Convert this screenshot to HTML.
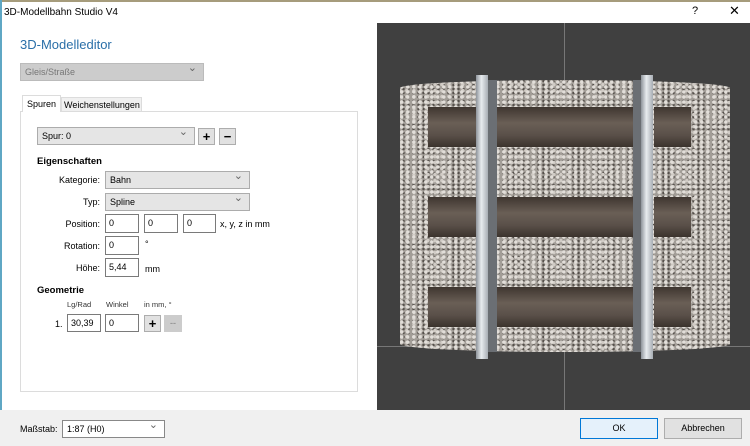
<!DOCTYPE html>
<html><head><style>
*{box-sizing:border-box;margin:0;padding:0}
body{width:750px;height:446px;overflow:hidden;background:#fff;font-family:"Liberation Sans",sans-serif;font-size:9px;color:#000;position:relative}
.a{position:absolute}
.cb{position:absolute;background:#e5e5e5;border:1px solid #acacac;padding:2px 4px;font-size:9px;line-height:12px}
.cb:after{content:"⌄";position:absolute;right:6px;top:-2px;color:#666;font-size:11px}
.in{position:absolute;background:#fff;border:1px solid #7a7a7a;padding:2px 3px;font-size:9px;line-height:12px}
.bt{position:absolute;background:#e1e1e1;border:1px solid #adadad;text-align:center;font-weight:bold;font-size:13px;line-height:15px}
.lb{position:absolute;text-align:right;font-size:9px}
.grav{background:
radial-gradient(circle at 30% 40%,#e2ded9 0 1.5px,transparent 2px) 0 0/6px 5px,
radial-gradient(circle at 70% 60%,#d0cbc5 0 1.5px,transparent 2px) 2px 1px/7px 6px,
radial-gradient(circle at 50% 50%,#55504b 0 1px,transparent 1.5px) 1px 3px/5px 4px,
#a29d97}
.tie{position:absolute;background:linear-gradient(#3f3630,#6a5f56 40%,#5a5049 70%,#3b332d);}
.rail{position:absolute;background:linear-gradient(90deg,#8e949b,#e8ecef 45%,#a7adb3);}
</style></head><body>
<div class="a" style="left:0;top:0;width:750px;height:2px;background:#a69c7c"></div>
<div class="a" style="left:0;top:0;width:2px;height:410px;background:#5fa7c4"></div>
<div class="a" style="left:4px;top:7px;font-size:10px">3D-Modellbahn Studio V4</div>
<div class="a" style="left:692px;top:5px;font-size:11px">?</div>
<div class="a" style="left:729px;top:3px;font-size:13px">✕</div>
<div class="a" style="left:20px;top:37px;font-size:13px;color:#2a6fa8">3D-Modelleditor</div>
<div class="cb" style="left:20px;top:63px;width:184px;height:18px;background:#ccc;border-color:#bbb;color:#777">Gleis/Straße</div>
<div class="a" style="left:20px;top:111px;width:338px;height:281px;border:1px solid #dcdcdc;background:#fff"></div>
<div class="a" style="left:22px;top:95px;width:39px;height:17px;border:1px solid #dcdcdc;border-bottom:none;background:#fff;padding:3px 4px">Spuren</div>
<div class="a" style="left:61px;top:97px;width:81px;height:15px;border:1px solid #dcdcdc;background:#f0f0f0;padding:2px 2px">Weichenstellungen</div>
<div class="cb" style="left:37px;top:127px;width:158px;height:18px">Spur: 0</div>
<div class="bt" style="left:198px;top:128px;width:17px;height:17px">+</div>
<div class="bt" style="left:219px;top:128px;width:17px;height:17px">−</div>
<div class="a" style="left:37px;top:156px;font-weight:bold;font-size:9.5px">Eigenschaften</div>
<div class="lb" style="left:30px;width:70px;top:175px">Kategorie:</div>
<div class="cb" style="left:105px;top:171px;width:145px;height:18px">Bahn</div>
<div class="lb" style="left:30px;width:70px;top:197px">Typ:</div>
<div class="cb" style="left:105px;top:193px;width:145px;height:18px">Spline</div>
<div class="lb" style="left:30px;width:70px;top:219px">Position:</div>
<div class="in" style="left:105px;top:214px;width:34px;height:19px">0</div>
<div class="in" style="left:144px;top:214px;width:34px;height:19px">0</div>
<div class="in" style="left:183px;top:214px;width:33px;height:19px">0</div>
<div class="a" style="left:220px;top:219px">x, y, z in mm</div>
<div class="lb" style="left:30px;width:70px;top:241px">Rotation:</div>
<div class="in" style="left:105px;top:236px;width:34px;height:19px">0</div>
<div class="a" style="left:145px;top:239px">°</div>
<div class="lb" style="left:30px;width:70px;top:263px">Höhe:</div>
<div class="in" style="left:105px;top:258px;width:34px;height:19px">5,44</div>
<div class="a" style="left:145px;top:264px">mm</div>
<div class="a" style="left:37px;top:285px;font-weight:bold;font-size:9.5px">Geometrie</div>
<div class="a" style="left:67px;top:300px;font-size:7.5px;color:#333">Lg/Rad</div>
<div class="a" style="left:106px;top:300px;font-size:7.5px;color:#333">Winkel</div>
<div class="a" style="left:144px;top:300px;font-size:7.5px;color:#333">in mm, °</div>
<div class="a" style="left:55px;top:319px">1.</div>
<div class="in" style="left:67px;top:314px;width:34px;height:18px">30,39</div>
<div class="in" style="left:105px;top:314px;width:34px;height:18px">0</div>
<div class="bt" style="left:144px;top:315px;width:17px;height:17px">+</div>
<div class="bt" style="left:164px;top:315px;width:18px;height:17px;background:#ccc;border-color:#ccc;color:#999;font-size:9px">--</div>
<!-- viewport -->
<div class="a" style="left:377px;top:23px;width:373px;height:387px;background:#404040"></div>
<div class="a" style="left:564px;top:23px;width:1px;height:387px;background:#777"></div>
<div class="a" style="left:377px;top:346px;width:373px;height:1px;background:#777"></div>
<div class="a grav" style="left:400px;top:80px;width:330px;height:272px;border-radius:50% 50% 50% 50%/8px 8px 8px 8px"></div>
<div class="tie" style="left:428px;top:107px;width:48px;height:40px"></div>
<div class="tie" style="left:428px;top:197px;width:48px;height:40px"></div>
<div class="tie" style="left:428px;top:287px;width:48px;height:40px"></div>
<div class="tie" style="left:497px;top:107px;width:136px;height:40px"></div>
<div class="tie" style="left:497px;top:197px;width:136px;height:40px"></div>
<div class="tie" style="left:497px;top:287px;width:136px;height:40px"></div>
<div class="tie" style="left:654px;top:107px;width:37px;height:40px"></div>
<div class="tie" style="left:654px;top:197px;width:37px;height:40px"></div>
<div class="tie" style="left:654px;top:287px;width:37px;height:40px"></div>
<div class="a" style="left:488px;top:80px;width:9px;height:272px;background:#6b6f74"></div>
<div class="a" style="left:633px;top:80px;width:8px;height:272px;background:#6b6f74"></div>
<div class="rail" style="left:476px;top:75px;width:12px;height:284px"></div>
<div class="rail" style="left:641px;top:75px;width:12px;height:284px"></div>
<!-- bottom -->
<div class="a" style="left:0;top:410px;width:750px;height:36px;background:#f0f0f0"></div>
<div class="a" style="left:20px;top:424px">Maßstab:</div>
<div class="cb" style="left:62px;top:420px;width:103px;height:18px;background:#fff;border-color:#888">1:87 (H0)</div>
<div class="a" style="left:580px;top:418px;width:78px;height:21px;background:#e5f1fb;border:1px solid #0078d7;text-align:center;line-height:19px">OK</div>
<div class="a" style="left:664px;top:418px;width:78px;height:21px;background:#e1e1e1;border:1px solid #adadad;text-align:center;line-height:19px">Abbrechen</div>
</body></html>
